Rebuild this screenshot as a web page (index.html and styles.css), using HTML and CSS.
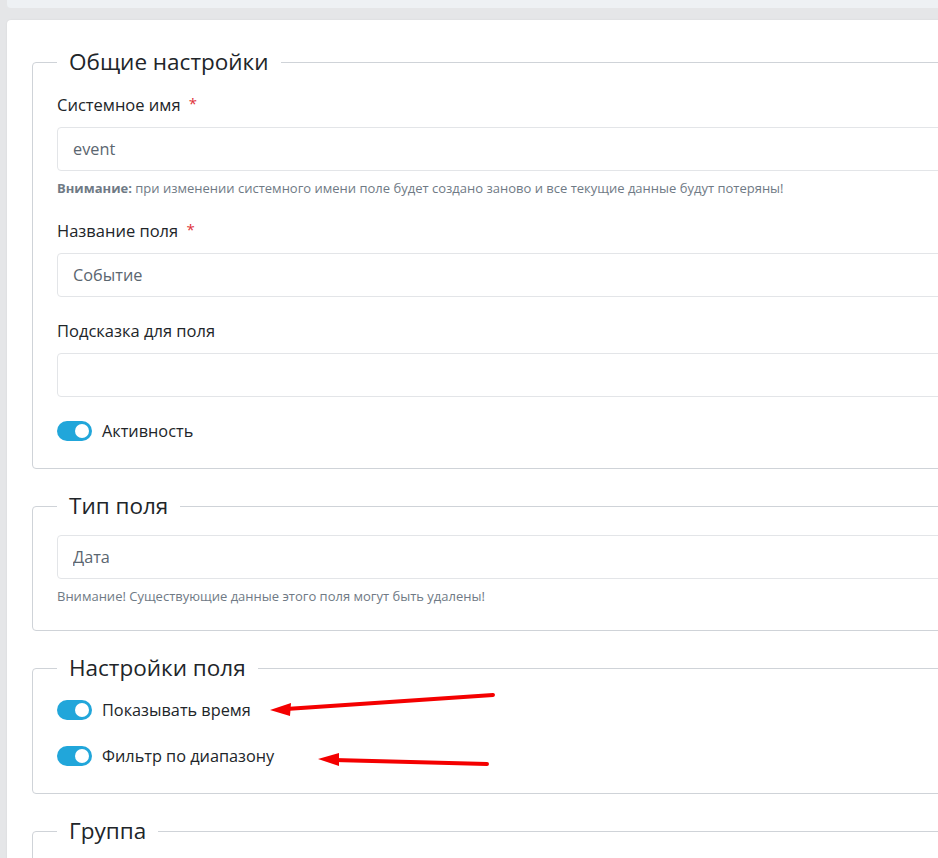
FILE: index.html
```html
<!DOCTYPE html>
<html lang="ru">
<head>
<meta charset="utf-8">
<title>Поле</title>
<link rel="stylesheet" href="styles.css">
</head>
<body>
<div class="page">
  <div class="topbar"></div>
  <div class="card">
    <fieldset class="group">
      <legend class="legend">Общие настройки</legend>
      <div class="field first">
        <label class="label">Системное имя <span class="req">*</span></label>
        <input class="input" type="text" value="event" readonly>
        <p class="help"><b>Внимание:</b> при изменении системного имени поле будет создано заново и все текущие данные будут потеряны!</p>
      </div>
      <div class="field">
        <label class="label">Название поля <span class="req">*</span></label>
        <input class="input" type="text" value="Событие" readonly>
      </div>
      <div class="field">
        <label class="label">Подсказка для поля</label>
        <input class="input" type="text" value="" readonly>
      </div>
      <div class="switch-row">
        <span class="switch"><span class="knob"></span></span>
        <span class="switch-label">Активность</span>
      </div>
    </fieldset>

    <fieldset class="group">
      <legend class="legend">Тип поля</legend>
      <div class="field last">
        <input class="input" type="text" value="Дата" readonly>
        <p class="help">Внимание! Существующие данные этого поля могут быть удалены!</p>
      </div>
    </fieldset>

    <fieldset class="group">
      <legend class="legend">Настройки поля</legend>
      <div class="switch-row spaced">
        <span class="switch"><span class="knob"></span></span>
        <span class="switch-label">Показывать время</span>
      </div>
      <div class="switch-row">
        <span class="switch"><span class="knob"></span></span>
        <span class="switch-label">Фильтр по диапазону</span>
      </div>
    </fieldset>

    <fieldset class="group">
      <legend class="legend">Группа</legend>
      <div class="field">
        <input class="input" type="text" value="" readonly>
      </div>
    </fieldset>
  </div>

  <svg class="annot" width="938" height="858" viewBox="0 0 938 858" xmlns="http://www.w3.org/2000/svg">
    <line x1="493" y1="695" x2="286" y2="709" stroke="#f40000" stroke-width="4" stroke-linecap="round"/>
    <polygon points="270,710 291,703 290,716" fill="#f40000"/>
    <line x1="487" y1="764" x2="334" y2="760" stroke="#f40000" stroke-width="4" stroke-linecap="round"/>
    <polygon points="318,759 339,753 339,766" fill="#f40000"/>
  </svg>
</div>
</body>
</html>
```
FILE: styles.css
```css
html, body {
  margin: 0;
  padding: 0;
}
body {
  background: #e5e6e8;
  font-family: "Open Sans", "Noto Sans", "DejaVu Sans", sans-serif;
  color: #212529;
  overflow: hidden;
}
.page {
  position: relative;
  width: 938px;
  height: 858px;
  overflow: hidden;
}
.topbar {
  margin-left: 7px;
  height: 8px;
  background: #eef1f4;
  border-bottom-left-radius: 4px;
}
.card {
  margin-top: 12px;
  margin-left: 7px;
  width: 1000px;
  background: #fff;
  border-radius: 4px;
  box-shadow: 0 0 2px rgba(0,0,0,0.08);
  padding: 29px 26px 20px 25px;
  box-sizing: border-box;
}
.group {
  margin: 0 0 24px 0;
  padding: 0 24px 25px 24px;
  border: 1px solid #cfd3d8;
  border-radius: 4px;
  min-width: 0;
}
.legend {
  padding: 0 12px;
  margin-bottom: 16px;
  font-size: 22.5px;
  line-height: 26px;
  font-weight: 400;
  color: #212529;
}
.field {
  margin-bottom: 22px;
}
.field.first {
  padding-top: 2px;
}
.field.last {
  margin-bottom: 0;
}
.label {
  display: block;
  font-size: 16.5px;
  line-height: 24px;
  margin-bottom: 10px;
  color: #212529;
}
.req {
  color: #e0313a;
  margin-left: 4px;
  font-size: 15px;
  position: relative;
  top: -2px;
}
.input {
  display: block;
  width: 100%;
  box-sizing: border-box;
  height: 44px;
  border: 1px solid #e3e5e8;
  border-radius: 4px;
  padding: 0 15px;
  font-family: inherit;
  font-size: 16.3px;
  color: #5b6670;
  background: #fff;
  outline: none;
}
.help {
  margin: 8px 0 0 0;
  font-size: 13px;
  line-height: 18px;
  color: #6f7a85;
}
.help b {
  font-weight: 700;
  color: #6f7a85;
}
.switch-row {
  display: flex;
  align-items: center;
  gap: 10px;
  height: 24px;
}
.switch-row.spaced {
  margin-top: 1px;
  margin-bottom: 22px;
}
.switch {
  display: flex;
  align-items: center;
  justify-content: flex-end;
  width: 35px;
  height: 20px;
  border-radius: 10px;
  background: #21a6da;
  padding: 0 3px;
  box-sizing: border-box;
}
.knob {
  width: 14px;
  height: 14px;
  border-radius: 50%;
  background: #fff;
}
.switch-label {
  font-size: 16.3px;
  line-height: 24px;
  color: #212529;
}
.annot {
  position: absolute;
  left: 0;
  top: 0;
  pointer-events: none;
}
```
